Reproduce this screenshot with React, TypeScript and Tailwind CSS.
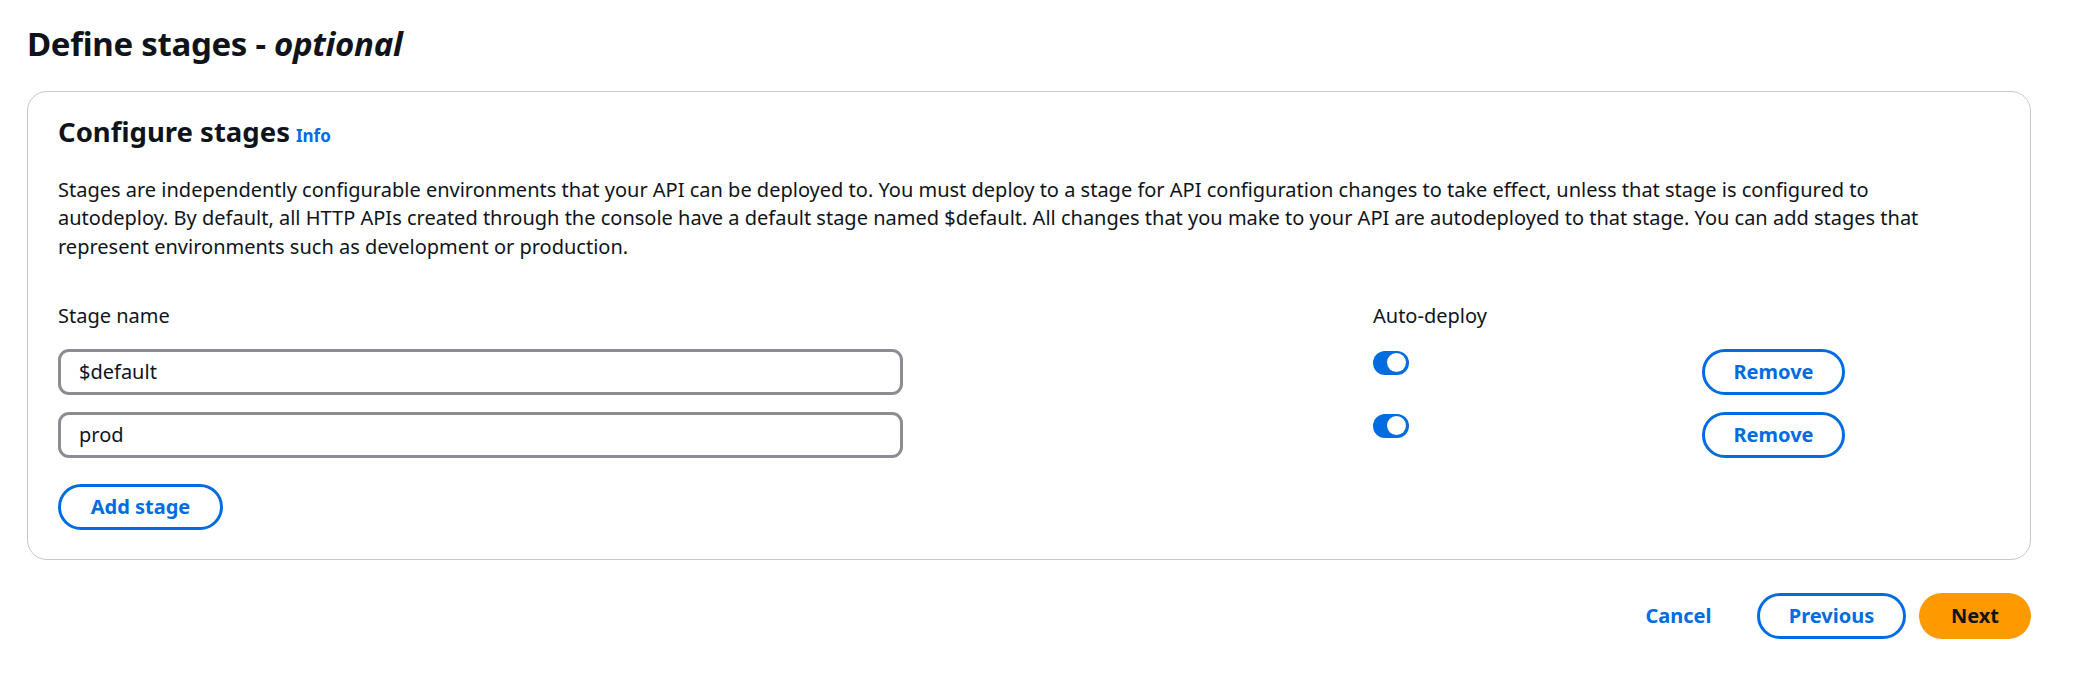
import React from "react";

function Toggle() {
  return (
    <div className="relative mt-[2px] h-[24px] w-[36px] rounded-full bg-[#006ce0]">
      <div className="absolute right-[3px] top-[2.5px] h-[19px] w-[19px] rounded-full bg-white" />
    </div>
  );
}

function StageRow({ name }: { name: string }) {
  return (
    <div className="grid grid-cols-[1315px_329px_143px]">
      <div>
        <div className="flex h-[46px] w-[845px] items-center rounded-[11px] border-[3px] border-[#8c8c94] bg-white pl-[18px] text-[20px] text-[#0f141a]">
          {name}
        </div>
      </div>
      <div>
        <Toggle />
      </div>
      <div>
        <button className="flex h-[46px] w-[143px] items-center justify-center rounded-full border-[3px] border-[#006ce0] bg-white text-[20px] font-bold text-[#006ce0]">
          Remove
        </button>
      </div>
    </div>
  );
}

export default function App() {
  return (
    <div
      className="h-[690px] w-full bg-white text-[#0f141a]"
      style={{ fontFamily: '"Noto Sans", "Open Sans", sans-serif' }}
    >
      <div className="pl-[27px] pr-[42px]">
        <h1 className="pt-[24px] text-[33px] font-bold leading-[40px] tracking-[-0.3px]">
          Define stages - <span className="italic">optional</span>
        </h1>
        <div className="mt-[27px] rounded-[20px] border border-[#c6c6cd] bg-white px-[30px] pb-[29px] pt-[23px]">
          <div className="flex items-baseline gap-[6px]">
            <h2 className="text-[27.5px] font-bold leading-[34px]">Configure stages</h2>
            <span className="text-[17px] font-bold text-[#006ce0]">Info</span>
          </div>
          <p className="mt-[27px] max-w-[1914px] text-[20px] leading-[28.4px]">
            Stages are independently configurable environments that your API can be deployed to. You must deploy to a
            stage for API configuration changes to take effect, unless that stage is configured to autodeploy. By
            default, all HTTP APIs created through the console have a default stage named $default. All changes that
            you make to your API are autodeployed to that stage. You can add stages that represent environments such as
            development or production.
          </p>
          <div className="mt-[41px] grid grid-cols-[1315px_329px_143px] text-[20px] leading-[28.4px]">
            <div>Stage name</div>
            <div>Auto-deploy</div>
            <div />
          </div>
          <div className="mt-[18px] flex flex-col gap-[17px]">
            <StageRow name="$default" />
            <StageRow name="prod" />
          </div>
          <button className="mt-[26px] flex h-[46px] w-[165px] items-center justify-center rounded-full border-[3px] border-[#006ce0] bg-white text-[20px] font-bold text-[#006ce0]">
            Add stage
          </button>
        </div>
        <div className="mt-[33px] flex justify-end gap-[13px]">
          <button className="flex h-[46px] w-[131px] items-center justify-center rounded-full text-[20px] font-bold text-[#006ce0]">
            Cancel
          </button>
          <button className="flex h-[46px] w-[149px] items-center justify-center rounded-full border-[3px] border-[#006ce0] bg-white text-[20px] font-bold text-[#006ce0]">
            Previous
          </button>
          <button className="flex h-[46px] w-[112px] items-center justify-center rounded-full bg-[#ff9900] text-[20px] font-bold text-[#0f141a]">
            Next
          </button>
        </div>
      </div>
    </div>
  );
}
